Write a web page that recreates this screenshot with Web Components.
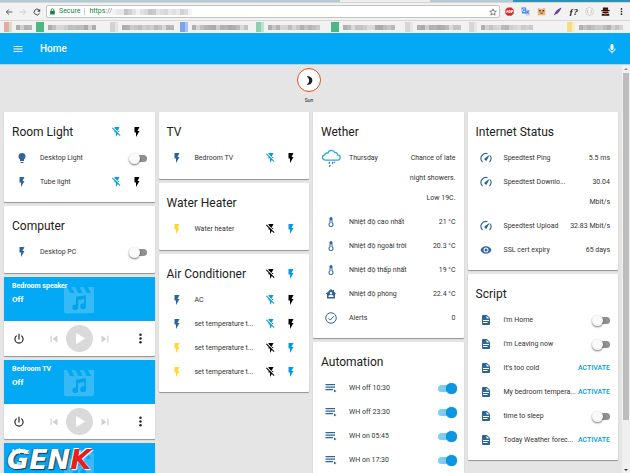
<!DOCTYPE html>
<html lang="en">
<head>
<meta charset="utf-8">
<title>Home</title>
<style>
  html, body { height: 100%; margin: 0; }
  body { overflow: hidden; background: #e5e5e5; color: #212121; font: 7px/20px Roboto, "Liberation Sans", sans-serif; }
</style>
</head>
<body>
<dash-app>
  <browser-bar slot="browser"></browser-bar>
  <app-bar slot="bar">Home</app-bar>
  <state-badge slot="badge">Sun</state-badge>
  <card-column>
    <entity-card heading="Room Light" group="off">
      <entity-row icon="bulb" name="Desktop Light" control="switch"></entity-row>
      <entity-row icon="flash" name="Tube light" control="off"></entity-row>
    </entity-card>
    <entity-card heading="Computer">
      <entity-row icon="flash" name="Desktop PC" control="switch"></entity-row>
    </entity-card>
    <media-card name="Bedroom speaker" state="Off"></media-card>
    <media-card name="Bedroom TV" state="Off"></media-card>
    <media-card name="Mi 4c" state="Idle"></media-card>
  </card-column>
  <card-column>
    <entity-card heading="TV">
      <entity-row icon="flash" name="Bedroom TV" control="off"></entity-row>
    </entity-card>
    <entity-card heading="Water Heater">
      <entity-row icon="flash" name="Water heater" control="on"></entity-row>
    </entity-card>
    <entity-card heading="Air Conditioner" group="on">
      <entity-row icon="flash" name="AC" control="off"></entity-row>
      <entity-row icon="flash" name="set temperature t..." control="off"></entity-row>
      <entity-row icon="flash" name="set temperature t..." control="on"></entity-row>
      <entity-row icon="flash" name="set temperature t..." control="on"></entity-row>
    </entity-card>
  </card-column>
  <card-column>
    <entity-card heading="Wether">
      <entity-row icon="rain" name="Thursday">Chance of late<br>night showers.<br>Low 19C.</entity-row>
      <entity-row icon="thermo" name="Nhiệt độ cao nhất">21 °C</entity-row>
      <entity-row icon="thermo" name="Nhiệt độ ngoài trời">20.3 °C</entity-row>
      <entity-row icon="thermo" name="Nhiệt độ thấp nhất">19 °C</entity-row>
      <entity-row icon="home" name="Nhiệt độ phòng">22.4 °C</entity-row>
      <entity-row icon="check" name="Alerts">0</entity-row>
    </entity-card>
    <entity-card heading="Automation">
      <entity-row icon="playlist" name="WH off 10:30" control="switch" checked></entity-row>
      <entity-row icon="playlist" name="WH off 23:30" control="switch" checked></entity-row>
      <entity-row icon="playlist" name="WH on 05:45" control="switch" checked></entity-row>
      <entity-row icon="playlist" name="WH on 17:30" control="switch" checked></entity-row>
    </entity-card>
  </card-column>
  <card-column>
    <entity-card heading="Internet Status">
      <entity-row icon="gauge" name="Speedtest Ping">5.5 ms</entity-row>
      <entity-row icon="gauge" name="Speedtest Downlo...">30.04<br>Mbit/s</entity-row>
      <entity-row icon="gauge" name="Speedtest Upload">32.83 Mbit/s</entity-row>
      <entity-row icon="eye" name="SSL cert expiry">65 days</entity-row>
    </entity-card>
    <entity-card heading="Script">
      <entity-row icon="file" name="i'm Home" control="switch"></entity-row>
      <entity-row icon="file" name="i'm Leaving now" control="switch"></entity-row>
      <entity-row icon="file" name="It's too cold" control="activate"></entity-row>
      <entity-row icon="file" name="My bedroom tempera..." control="activate"></entity-row>
      <entity-row icon="file" name="time to sleep" control="switch"></entity-row>
      <entity-row icon="file" name="Today Weather forec..." control="activate"></entity-row>
    </entity-card>
  </card-column>
</dash-app>

<script>
const ICONS = {
  flash: '<path d="M7,2V13H10V22L17,10H13L17,2H7Z"/>',
  flashOff: '<path d="M17,10H13L17,2H7V4.18L15.46,12.64M3.27,3L2,4.27L7,9.27V13H10V22L13.58,15.86L17.73,20L19,18.73L3.27,3Z"/>',
  bulb: '<path d="M12,2A7,7 0 0,0 5,9C5,11.38 6.19,13.47 8,14.74V17A1,1 0 0,0 9,18H15A1,1 0 0,0 16,17V14.74C17.81,13.47 19,11.38 19,9A7,7 0 0,0 12,2M9,21A1,1 0 0,0 10,22H14A1,1 0 0,0 15,21V20H9V21Z"/>',
  thermo: '<path d="M17,17A5,5 0 0,1 12,22A5,5 0 0,1 7,17C7,15.36 7.79,13.91 9,13V5A3,3 0 0,1 12,2A3,3 0 0,1 15,5V13C16.21,13.91 17,15.36 17,17M11,8V14.17C9.83,14.58 9,15.69 9,17A3,3 0 0,0 12,20A3,3 0 0,0 15,17C15,15.69 14.17,14.58 13,14.17V8H11Z"/>',
  home: '<path fill-rule="evenodd" d="M12,2L1,12H4V21H20V12H23L18,7.5V4H16V5.7ZM12,8A2.4,2.4 0 0,1 12,12.8A2.4,2.4 0 0,1 12,8M7,18V17C7,15 9.5,14.2 12,14.2C14.5,14.2 17,15 17,17V18Z"/>',
  check: '<g fill="none" stroke="currentColor" stroke-width="2"><circle cx="12" cy="12" r="10.5"/><path d="M7 12.5l3.5 3.5 7-7.5"/></g>',
  playlist: '<path d="M1,4H20V6.4H1ZM1,9H20V11.4H1ZM1,14H16V16.4H1ZM18,15V21L23,18Z"/>',
  gauge: '<path fill="none" stroke="currentColor" stroke-width="2.2" d="M5 20A10 10 0 0 1 15 3.3M20.4 7.5A10 10 0 0 1 19 20"/><path d="M19.5 5.5L14.4 15.2A2.8 2.8 0 1 1 10 12.2Z"/>',
  eye: '<path d="M12,9A3,3 0 0,0 9,12A3,3 0 0,0 12,15A3,3 0 0,0 15,12A3,3 0 0,0 12,9M12,17A5,5 0 0,1 7,12A5,5 0 0,1 12,7A5,5 0 0,1 17,12A5,5 0 0,1 12,17M12,4.5C7,4.5 2.73,7.61 1,12C2.73,16.39 7,19.5 12,19.5C17,19.5 21.27,16.39 23,12C21.27,7.61 17,4.5 12,4.5Z"/>',
  file: '<path d="M13,9H18.5L13,3.5V9M6,2H14L20,8V20A2,2 0 0,1 18,22H6C4.89,22 4,21.1 4,20V4C4,2.89 4.89,2 6,2M15,18V16H6V18H15M18,14V12H6V14H18Z"/>',
  rain: '<path fill="none" stroke="#29a9e0" stroke-width="1.5" d="M5 14.5C1 14 .5 9 4.5 8.3C5 6 7 5.500 8.200 6.300C9 2 15 1.500 16.500 5.500C18.500 5 20 6.500 19.800 8.300C24 8.500 24 14 20 14.500Z"/><g fill="none" stroke="#2a6ea8" stroke-width="1.6"><path d="M10.500 17l-1 1.800M14.500 17l-1 1.800M11 20.500l-1 2M16.500 16.500l-.6 1"/></g>',
  menu: '<path d="M3,6H21V8H3V6M3,11H21V13H3V11M3,16H21V18H3V16Z"/>',
  mic: '<path d="M12 14c1.66 0 3-1.34 3-3V5c0-1.66-1.34-3-3-3S9 3.340 9 5v6c0 1.660 1.340 3 3 3zm5.300-3c0 3-2.540 5.100-5.300 5.100S6.700 14 6.700 11H5c0 3.410 2.720 6.230 6 6.720V21h2v-3.280c3.280-.48 6-3.300 6-6.720z"/>',
  power: '<path d="M16.56,5.44L15.11,6.89C16.84,7.94 18,9.83 18,12A6,6 0 0,1 12,18A6,6 0 0,1 6,12C6,9.83 7.16,7.94 8.88,6.88L7.44,5.44C5.36,6.88 4,9.28 4,12A8,8 0 0,0 12,20A8,8 0 0,0 20,12C20,9.28 18.64,6.88 16.56,5.44M13,3H11V13H13"/>',
  prev: '<path d="M6 6h2v12H6zm3.500 6l8.500 6V6z"/>',
  next: '<path d="M6 18l8.500-6L6 6v12zM16 6v12h2V6h-2z"/>',
  play: '<circle cx="12" cy="12" r="12" fill="#dadada"/><path fill="#fff" d="M9 7v10l8-5z"/>',
  dots: '<circle cx="12" cy="5" r="2.300"/><circle cx="12" cy="12" r="2.300"/><circle cx="12" cy="19" r="2.300"/>',
  film: '<path d="M2 4H4L6 8H9L7 4H9.500L11.500 8H14.500L12.500 4H15L17 8H20L18 4H22V20A1.500 1.500 0 0 1 20.500 21.500H3.500A1.500 1.500 0 0 1 2 20Z"/><g fill="#03a2ee"><circle cx="9.500" cy="17.500" r="1.900"/><circle cx="14.700" cy="16.800" r="1.900"/><path d="M10 10.500L16.600 9.500V17H15.500V12L11.400 12.600V17.500H10Z"/></g>',
  moon: '<path d="M6 3C14 1.500 19.500 7 18 14C16.500 19.500 11 22.500 5.500 20.500C13 17 13 8 6 3Z"/>',
  back: '<path fill="none" stroke="currentColor" stroke-width="2.600" d="M22 12H4M12 4l-8 8 8 8"/>',
  forward: '<path fill="none" stroke="currentColor" stroke-width="2.200" d="M2 12h18M12 4l8 8-8 8"/>',
  reload: '<path fill="none" stroke="currentColor" stroke-width="3" d="M19.500 16A8.500 8.500 0 1 1 18 6"/><path d="M21.500 2v9h-9z"/>',
  lock: '<path d="M4 10h16v12H4z"/><path fill="none" stroke="currentColor" stroke-width="3" d="M7.500 11V7a4.500 4.500 0 0 1 9 0v4"/>',
  star: '<path fill="none" stroke="currentColor" stroke-width="2.200" d="M12 2.500l2.800 6.600 7.200.6-5.500 4.700 1.700 7L12 17.600l-6.200 3.800 1.700-7L2 9.700l7.200-.6z"/>',
  abp: '<path fill="#d5281f" d="M7 1h10l6 6v10l-6 6H7l-6-6V7z"/><path stroke="#fff" stroke-width="2.500" fill="none" d="M4 15l2-6 2 6M10.500 9v6h3v-6zM17 16V9h3v3h-3"/>',
  translate: '<path fill="#4285f4" d="M1 1h12l4 16H3z"/><path fill="#c9d7ee" d="M13 7h10v16h-9l-2-5h4z"/><path stroke="#fff" stroke-width="2" fill="none" d="M11 6a4 4 0 1 0 0 5H8"/><path stroke="#386abd" stroke-width="2" fill="none" d="M15 11h7M19 11c0 4-2 6-4 7M16 13l5 6"/>',
  face: '<path fill="#efb27a" d="M2 3h6l2 2h4l2-2h6v19H2z"/><path fill="#453024" d="M6 8h4v4H6zM15 8h4v4h-4zM9 15h7v2H9z"/>',
  feather: '<path fill="#6c3db0" d="M23 1C12 5 6 11 4 18l-3 5 5-3C13 18 19 11 23 1z"/>',
  braces: '<circle cx="12" cy="12" r="10.500" fill="#f7f7f7" stroke="#b9b9b9" stroke-width="1.500"/><path fill="none" stroke="#bbb" stroke-width="2" d="M9 8H7v8h2M15 8h2v8h-2"/>',
  agent: '<path fill="#3b1712" d="M5 1h14v7h4v3H1V8h4z"/><path fill="#ba4928" d="M5 11h14v5H5z"/><path fill="#291310" d="M4 13h16v3H4zM2 18h20v5H2z"/><path fill="#d02b22" d="M9 17h6v4H9z"/>'
};
const icon = name => `<svg viewBox="0 0 24 24" fill="currentColor" aria-hidden="true">${ICONS[name]}</svg>`;

const BASE = `:host,*{box-sizing:border-box}svg{display:block;width:12px;height:12px;flex:none}
  button{font:inherit;color:inherit;border:0;padding:0;margin:0;background:none;display:grid;place-items:center}`;

class Base extends HTMLElement {
  connectedCallback() {
    if (this.shadowRoot) return;
    this.attachShadow({ mode: 'open' }).innerHTML = `<style>${BASE}${this.css()}</style>${this.html()}`;
  }
  attr(n) { return this.getAttribute(n) || ''; }
}

customElements.define('dash-app', class extends Base {
  css() { return `
    :host{display:flex;flex-direction:column;height:100vh;overflow:hidden}
    .body{flex:1;min-height:0;display:flex;overflow:hidden}
    main{flex:1;min-width:0}
    .badges{display:flex;justify-content:center;height:47px;padding-top:3px}
    .cards{display:grid;grid-template-columns:repeat(4,minmax(0,1fr));gap:4px;padding:0 4px;align-items:start}
    .scroll{width:8px;flex:none;background:#f0f0f0;display:flex;flex-direction:column;align-items:center;padding:3px 1px 2px}
    .thumb{width:6px;flex:1;margin:3px 0 49px;background:#bdbdbd}
    .scroll i{border:2px solid transparent;border-top:0;border-bottom:2px solid #8a8a8a}
    .scroll i:last-child{border:2px solid transparent;border-bottom:0;border-top:2px solid #333}`; }
  html() { return `<slot name="browser"></slot><slot name="bar"></slot>
    <div class="body"><main><div class="badges"><slot name="badge"></slot></div><div class="cards"><slot></slot></div></main>
    <div class="scroll"><i></i><div class="thumb"></div><i></i></div></div><brand-mark></brand-mark>`; }
});

/* Bookmark titles and the address path are obscured by coarse grey blocks. */
customElements.define('pixel-strip', class extends Base {
  css() { return `:host{display:flex;flex:none;overflow:hidden}i{flex:none;width:4px;height:var(--h,5px)}`; }
  html() {
    let seed = +this.attr('seed') || 3, out = '';
    const n = +this.attr('cells'), base = +this.attr('shade') || 170;
    for (let k = 0; k < n; k++) {
      seed = (seed * 73 + 41) % 101;
      const v = base + (seed % 50);
      out += `<i style="background:rgb(${v},${v},${v})"></i>`;
    }
    return out;
  }
});

customElements.define('browser-bar', class extends Base {
  css() { return `
    :host{display:block;background:#f2f2f2;color:#444}
    .tabs{display:flex;height:2px}
    .tabs i{background:#b5cbd4;flex:340}.tabs i:nth-child(2){background:#eee;flex:90}.tabs i:nth-child(3){flex:83}.tabs i:nth-child(4){background:#2b93b5;flex:117}
    .tools{display:flex;align-items:center;height:18px;padding:0 0 0 5px;border-top:1px solid #d5d5d5}
    .nav{width:14px;height:14px;place-items:center start}
    .nav svg{width:8px;height:8px}
    .url{flex:1;display:flex;align-items:center;height:13px;border:1px solid #c4c4c4;border-radius:2px;background:#fff;margin:0 2px 0 -1px;padding:0 2px;color:#18853d;line-height:11px}
    .url svg{width:7px;height:7px}.url span{margin-left:3px}.url .sep{width:1px;height:7px;background:#ccc;margin:0 4px}
    .url b{font-weight:400;color:#777}.url pixel-strip{--h:6px}
    .url button{margin-left:auto;color:#555}
    .ext{width:15px;margin-right:1px;color:#222}.ext svg{width:9px;height:9px}
    .ext.f{font:italic bold 9px/10px "Liberation Serif",serif}
    .marks{display:flex;align-items:center;height:13px;border-top:1px solid #d8d8d8;overflow:hidden;padding:0 4px}
    .mark{display:flex;align-items:center;gap:4px;flex:none;overflow:hidden}
    .fav{flex:none;width:8px;height:10px;background:linear-gradient(90deg,var(--c) 60%,var(--d) 0)}`; }
  html() {
    const marks = [['#e7a9a0','#cfe3c5',4,32],['#4cb885','#4cb885',12,74],['#d2d2d2','#e2e2e2',13,70],['#7da2ee','#a9c3f6',14,76],
      ['#8fcfb0','#bfe3cf',13,75],['#4cb885','#4cb885',13,74],['#d6d6d6','#e5e5e5',11,64],['#d6d6d6','#e5e5e5',13,98],['#f5dc86','#f8edc4',11,56]];
    const ext = [['abp','Ad blocker'],['translate','Translate'],['face','Face'],['feather','Feather']];
    return `<div class="tabs"><i></i><i></i><i></i><i></i></div>
    <div class="tools"><button class="nav" aria-label="Back">${icon('back')}</button><button class="nav" aria-label="Forward" style="color:#c2c2c2">${icon('forward')}</button><button class="nav" aria-label="Reload">${icon('reload')}</button>
      <div class="url">${icon('lock')}<span>Secure</span><i class="sep"></i><span style="margin:0">https<b>://</b></span><pixel-strip cells="20" shade="195" seed="7"></pixel-strip><button aria-label="Bookmark">${icon('star').replace('<svg','<svg style="width:8px;height:8px"')}</button></div>
      ${ext.map(e => `<button class="ext" aria-label="${e[1]}">${icon(e[0])}</button>`).join('')}<button class="ext f">ƒ?</button>
      <button class="ext" aria-label="Braces">${icon('braces')}</button><button class="ext" aria-label="Agent">${icon('agent')}</button><button class="ext" aria-label="Menu">${icon('dots')}</button></div>
    <div class="marks">${marks.map((m, i) => `<span class="mark" style="width:${m[3]}px"><i class="fav" style="--c:${m[0]};--d:${m[1]}"></i><pixel-strip cells="${m[2]}" seed="${i * 9 + 5}"></pixel-strip></span>`).join('')}</div>`;
  }
});

customElements.define('app-bar', class extends Base {
  css() { return `
    :host{display:flex;align-items:center;height:32px;flex:none;background:#03a9f4;color:#fff;padding:0 12px;border-bottom:1px solid #a8d6ee}
    h1{flex:1;margin:0 0 0 16px;font:500 10px/20px Roboto,sans-serif}`; }
  html() { return `<button aria-label="Menu">${icon('menu')}</button><h1><slot></slot></h1><button aria-label="Voice">${icon('mic')}</button>`; }
});

customElements.define('state-badge', class extends Base {
  css() { return `
    :host{display:flex;flex-direction:column;align-items:center;gap:4px;margin-right:4px;font-size:5px;line-height:8px}
    .ring{width:24px;height:24px;border:1px solid #df4c1e;border-radius:50%;background:#fff;display:grid;place-items:center}
    svg{width:11px;height:11px}`; }
  html() { return `<div class="ring">${icon('moon')}</div><span><slot></slot></span>`; }
});

customElements.define('card-column', class extends Base {
  css() { return `:host{display:flex;flex-direction:column;gap:4px;min-width:0}`; }
  html() { return `<slot></slot>`; }
});

const PAIR_CSS = `.pair{display:flex;flex:none}.pair button{width:20px;height:20px}.lit{color:#039be5}.dim{color:#000}`;
const pair = (on, name) => `<div class="pair"><button class="${on ? 'dim' : 'lit'}" aria-label="Turn off ${name}">${icon('flashOff')}</button><button class="${on ? 'lit' : 'dim'}" aria-label="Turn on ${name}">${icon('flash')}</button></div>`;

const CARD_CSS = `background:#fff;box-shadow:0 1px 1px rgba(0,0,0,.36);border-radius:1px;`;

customElements.define('entity-card', class extends Base {
  css() { return `
    :host{display:block;min-height:67px;padding:8px;${CARD_CSS}}
    header{display:flex;align-items:center;justify-content:space-between;height:24px;margin-bottom:2px}
    h2{margin:0;font:400 12px/24px Roboto,sans-serif;white-space:nowrap}${PAIR_CSS}`; }
  html() { const g = this.attr('group');
    return `<header><h2>${this.attr('heading')}</h2>${g ? pair(g === 'on', this.attr('heading')) : ''}</header><slot></slot>`; }
});

customElements.define('entity-row', class extends Base {
  css() { return `
    :host{display:flex;align-items:flex-start;padding:2px 0;line-height:20px;color:#333}
    .ico{width:20px;height:20px;display:grid;place-items:center;color:#2f639e;margin-right:8px;flex:none}
    .ico.yellow{color:#fdd835}.ico.rain svg{width:20px;height:20px}
    .name{flex:1;min-width:0;white-space:nowrap}
    .value{text-align:right;flex:none}
    input{appearance:none;margin:4px 0;width:18px;height:12px;flex:none;position:relative}
    input::before{content:"";position:absolute;left:4px;top:3px;width:14px;height:7px;border-radius:4px;background:#8f8f8f}
    input::after{content:"";position:absolute;left:0;top:1px;width:11px;height:11px;border-radius:50%;background:#fafafa;box-shadow:0 1px 2px rgba(0,0,0,.55)}
    input:checked::before{left:0;background:#7fccf3}
    input:checked::after{left:8px;background:#0d95e0;box-shadow:0 0 1px #0d95e0}
    .act{font-weight:500;color:#039be5;height:20px}${PAIR_CSS}`; }
  html() {
    const c = this.attr('control'), n = this.attr('name'), i = this.attr('icon');
    const end = c === 'switch' ? `<input type="checkbox" role="switch" id="sw"${this.hasAttribute('checked') ? ' checked' : ''}>`
      : c === 'activate' ? `<button class="act">ACTIVATE</button>`
      : c ? pair(c === 'on', n) : `<span class="value"><slot></slot></span>`;
    const label = c === 'switch' ? `<label class="name" for="sw">${n}</label>` : `<span class="name">${n}</span>`;
    return `<span class="ico ${i} ${c === 'on' ? 'yellow' : ''}">${icon(i)}</span>${label}${end}`;
  }
});

customElements.define('media-card', class extends Base {
  css() { return `
    :host{display:block;${CARD_CSS}}
    .top{display:grid;grid-template-columns:1fr auto 1fr;height:44px;background:#03a9f4;color:#fff;font-weight:700;padding:2px 8px}
    .text{white-space:nowrap;line-height:14px;z-index:1}.text div+div{font-size:8px}
    .film{color:#35baf6;align-self:center}.film svg{width:36px;height:36px}
    .bar{display:grid;grid-template-columns:1fr auto 1fr;align-items:center;height:35px;padding:0 8px}
    .mid{display:flex;align-items:center;gap:5px;color:#d0d0d0}.mid svg{width:14px;height:14px}.mid .play svg{width:27px;height:27px}
    .bar>button{justify-self:start}.bar>button svg{width:14px;height:14px}.bar>button:last-child{justify-self:end}.bar>button:last-child svg{width:13px;height:13px}`; }
  html() { return `<div class="top"><div class="text" style="width:0"><div>${this.attr('name')}</div><div>${this.attr('state')}</div></div><div class="film">${icon('film')}</div></div>
    <div class="bar"><button aria-label="Power">${icon('power')}</button>
    <div class="mid"><button aria-label="Previous">${icon('prev')}</button><button class="play" aria-label="Play">${icon('play')}</button><button aria-label="Next">${icon('next')}</button></div>
    <button aria-label="More">${icon('dots')}</button></div>`; }
});

/* Publisher watermark laid over the lower left corner. */
customElements.define('brand-mark', class extends Base {
  css() { return `
    :host{position:absolute;left:7px;bottom:4px;font:italic 900 27px/18px "DejaVu Sans","Liberation Sans",sans-serif;color:#fff;text-shadow:1px 1px 1px #234,-1px 0 1px #456}
    span{color:#e3201f;text-shadow:1px 1px 1px #fff,-1px -1px 0 #fff}`; }
  html() { return `GEN<span>K</span>`; }
});
</script>
</body>
</html>
